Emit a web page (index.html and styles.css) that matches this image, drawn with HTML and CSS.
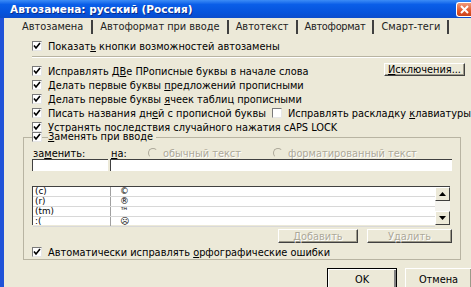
FILE: index.html
```html
<!DOCTYPE html>
<html lang="ru">
<head>
    <meta charset="UTF-8">
    <title>Автозамена</title>
    <link rel="stylesheet" href="styles.css">
</head>
<body>
<div class="window">
    <div class="titlebar">
        <span class="title">Автозамена: русский (Россия)</span>
        <span class="close-btn">
            <svg width="9" height="9" viewBox="0 0 9 9"><path d="M1 1L8 8M8 1L1 8" stroke="#fff" stroke-width="2"/></svg>
        </span>
    </div>

    <div class="client">
        <!-- tabs -->
        <div class="tabs">
            <span class="tab tab-active">Автозамена</span>
            <span class="tab">Автоформат при вводе</span>
            <span class="tab">Автотекст</span>
            <span class="tab tab-narrow">Автоформат</span>
            <span class="tab">Смарт-теги</span>
        </div>

        <div class="page">
            <div class="row">
                <span class="cb checked"></span>
                <span>Показат<u>ь</u> кнопки возможностей автозамены</span>
            </div>
            <div class="sep"></div>

            <div class="opts">
                <div class="row">
                    <span class="cb checked"></span>
                    <span>Исправлять Д<u>В</u>е ПРописные буквы в начале слова</span>
                    <span class="btn btn-exc"><u>И</u>сключения...</span>
                </div>
                <div class="row">
                    <span class="cb checked"></span>
                    <span>Делать первые буквы <u>п</u>редложений прописными</span>
                </div>
                <div class="row">
                    <span class="cb checked"></span>
                    <span>Делать первые буквы <u>я</u>чеек таблиц прописными</span>
                </div>
                <div class="row">
                    <span class="cb checked"></span>
                    <span class="days">Писать названия дн<u>е</u>й с прописной буквы</span>
                    <span class="cb"></span>
                    <span>Исправлять раскладку <u>к</u>лавиатуры</span>
                </div>
                <div class="row">
                    <span class="cb checked"></span>
                    <span>Устранять пос<u>л</u>едствия случайного нажатия cAPS LOCK</span>
                </div>
            </div>

            <div class="group">
                <div class="group-label">
                    <span class="cb checked"></span>
                    <span class="group-text"><u>З</u>аменять при вводе</span>
                </div>

                <div class="labels">
                    <span class="lbl-from">за<u>м</u>енить:</span>
                    <span class="lbl-to"><u>н</u>а:</span>
                    <span class="radio-item radio-first"><span class="radio"></span>обычный текст</span>
                    <span class="radio-item"><span class="radio"></span>форматированный текст</span>
                </div>
                <div class="inputs">
                    <span class="field field-from"></span>
                    <span class="field field-to"></span>
                </div>

                <div class="list">
                    <div class="list-rows">
                        <div class="list-row"><span class="c1">(c)</span><span class="c2">©</span></div>
                        <div class="list-row"><span class="c1">(r)</span><span class="c2">®</span></div>
                        <div class="list-row"><span class="c1">(tm)</span><span class="c2">™</span></div>
                        <div class="list-row"><span class="c1">:(</span><span class="c2">☹</span></div>
                    </div>
                    <div class="scroll">
                        <span class="sbtn">
                            <svg width="7" height="4" viewBox="0 0 7 4"><path d="M0 4L3.5 0L7 4Z" fill="#000"/></svg>
                        </span>
                        <span class="track"></span>
                        <span class="sbtn">
                            <svg width="7" height="4" viewBox="0 0 7 4"><path d="M0 0L3.5 4L7 0Z" fill="#000"/></svg>
                        </span>
                    </div>
                </div>

                <div class="list-buttons">
                    <span class="btn btn-dis">Добавить</span>
                    <span class="btn btn-dis">Удалить</span>
                </div>

                <div class="row row-spell">
                    <span class="cb checked"></span>
                    <span>Автоматически исправлять <u>о</u>рфографические ошибки</span>
                </div>
            </div>
        </div>

        <div class="footer">
            <span class="btn btn-ok">OK</span>
            <span class="btn btn-cancel">Отмена</span>
        </div>
    </div>
</div>
</body>
</html>
```

FILE: styles.css
```css
body, html {
    margin: 0;
    height: 100%;
    overflow: hidden;
    background: #ece9d8;
    font-family: "DejaVu Sans", Verdana, sans-serif;
    font-size: 9.8px;
    color: #000;
}

u {
    text-decoration: underline;
}

.window {
    width: 471px;
    height: 287px;
    display: flex;
    flex-direction: column;
}

/* Title bar */
.titlebar {
    height: 18px;
    flex: none;
    display: flex;
    align-items: center;
    justify-content: space-between;
    padding-left: 10px;
    background: linear-gradient(#3c8cf6 0%, #0a5ee8 25%, #0553dc 70%, #0a4ccc 100%);
}

.title {
    color: #fff;
    font-weight: bold;
    font-size: 10.5px;
    text-shadow: 1px 1px 0 #0a2d8c;
}

.close-btn {
    width: 14px;
    height: 13px;
    margin-top: 1px;
    display: flex;
    align-items: center;
    justify-content: center;
    background: linear-gradient(#f19b7b, #e2572a 60%, #c9431c);
    border: 1px solid #fff;
    border-right: none;
    border-radius: 3px 0 0 3px;
}

.client {
    flex: 1;
    display: flex;
    flex-direction: column;
    border-left: 4px solid #1f52d8;
}

/* Tabs */
.tabs {
    height: 18px;
    flex: none;
    display: flex;
    align-items: flex-end;
    padding-left: 18px;
    padding-bottom: 2px;
    box-sizing: border-box;
}

.tab {
    height: 14px;
    line-height: 14px;
    padding: 0 7px 0 7px;
    border-right: 2px solid #404040;
    color: #222;
    white-space: nowrap;
}

.tab-active {
    padding-left: 0;
    padding-right: 8px;
}

.tab-narrow {
    letter-spacing: -0.3px;
}

/* Page */
.page {
    flex: none;
    height: 225px;
    padding-left: 28px;
    padding-top: 3px;
    box-sizing: border-box;
}

.row {
    display: flex;
    align-items: center;
    height: 14px;
    white-space: nowrap;
}

.cb {
    width: 8px;
    height: 8px;
    margin-right: 6px;
    background: #fff;
    border: 1px solid;
    border-color: #7a7a7a #e6e6e6 #e6e6e6 #7a7a7a;
    display: inline-flex;
    flex: none;
}

.cb.checked {
    background: #fff url("data:image/svg+xml;utf8,<svg xmlns='http://www.w3.org/2000/svg' width='8' height='8'><path d='M1 3.5L3 6L7 1' stroke='black' stroke-width='1.6' fill='none'/></svg>") no-repeat center;
}

.sep {
    height: 1px;
    background: #b8b4a2;
    border-bottom: 1px solid #fff;
    margin-top: 3px;
}

.opts {
    padding-top: 6px;
}

.days {
    width: 225px;
}

.btn {
    display: inline-flex;
    align-items: center;
    justify-content: center;
    background: #ece9d8;
    border: 1px solid;
    border-color: #fff #404040 #404040 #fff;
    box-shadow: inset -1px -1px 0 #9d9a8a;
    box-sizing: border-box;
    white-space: nowrap;
}

.btn-exc {
    width: 81px;
    height: 13px;
    margin-left: auto;
    margin-right: 6px;
    margin-top: -3px;
}

/* Group box */
.group {
    margin: 3px 0 0 -9px;
    width: 438px;
    height: 123px;
    box-sizing: border-box;
    border: 1px solid #b8b4a2;
    padding-left: 8px;
}

.group-label {
    display: flex;
    align-items: center;
    height: 10px;
    line-height: 10px;
    margin-top: -6px;
    white-space: nowrap;
}

.group-text {
    background: #ece9d8;
    padding-right: 3px;
}

.labels {
    display: flex;
    align-items: center;
    height: 12px;
    margin-top: 5px;
    white-space: nowrap;
}

.lbl-from {
    width: 78px;
    padding-left: 1px;
}

.lbl-to {
    width: 37px;
}

.radio-item {
    display: flex;
    align-items: center;
    color: #aca899;
    text-shadow: 1px 1px 0 #fff;
}

.radio-first {
    width: 125px;
}

.radio {
    flex: none;
    width: 8px;
    height: 8px;
    border-radius: 50%;
    border: 1px solid;
    border-color: #aca899 #ece9d8 #ece9d8 #aca899;
    margin-right: 5px;
}

.inputs {
    display: flex;
}

.field {
    height: 11px;
    background: #fff;
    border-top: 1px solid #404040;
    border-left: 1px solid #404040;
}

.field-from {
    width: 75px;
    margin-right: 2px;
}

.field-to {
    width: 341px;
}

/* Replacement list */
.list {
    display: flex;
    margin-top: 15px;
    width: 417px;
    height: 38px;
    background: #fff;
    border-top: 1px solid #404040;
    border-left: 1px solid #404040;
}

.list-rows {
    flex: 1;
}

.list-row {
    display: flex;
    height: 9px;
    line-height: 9px;
    border-bottom: 1px solid #d8d8d8;
    font-size: 8.8px;
}

.c1 {
    width: 75px;
    padding-left: 2px;
    border-right: 1px solid #a0a0a0;
}

.c2 {
    padding-left: 9px;
}

.scroll {
    width: 15px;
    display: flex;
    flex-direction: column;
    background: #f4f3ee;
}

.sbtn {
    height: 14px;
    display: flex;
    align-items: center;
    justify-content: center;
    background: #ece9d8;
    border: 1px solid;
    border-color: #fff #404040 #404040 #fff;
    box-sizing: border-box;
}

.track {
    flex: 1;
}

.list-buttons {
    display: flex;
    gap: 9px;
    margin: 4px 0 0 246px;
}

.btn-dis {
    height: 14px;
    width: 80px;
    color: #aca899;
    text-shadow: 1px 1px 0 #fff;
}

.btn-dis + .btn-dis {
    width: 85px;
}

.row-spell {
    margin-top: 2px;
}

/* Footer */
.footer {
    flex: 1;
    display: flex;
    justify-content: flex-end;
    align-items: flex-start;
    gap: 8px;
    padding-top: 7px;
}

.btn-ok {
    width: 70px;
    height: 22px;
    border: 1px solid #000;
    box-shadow: inset 1px 1px 0 #fff, inset -2px -2px 0 #808080;
}

.btn-cancel {
    width: 66px;
    height: 22px;
    border-right: none;
}
```
